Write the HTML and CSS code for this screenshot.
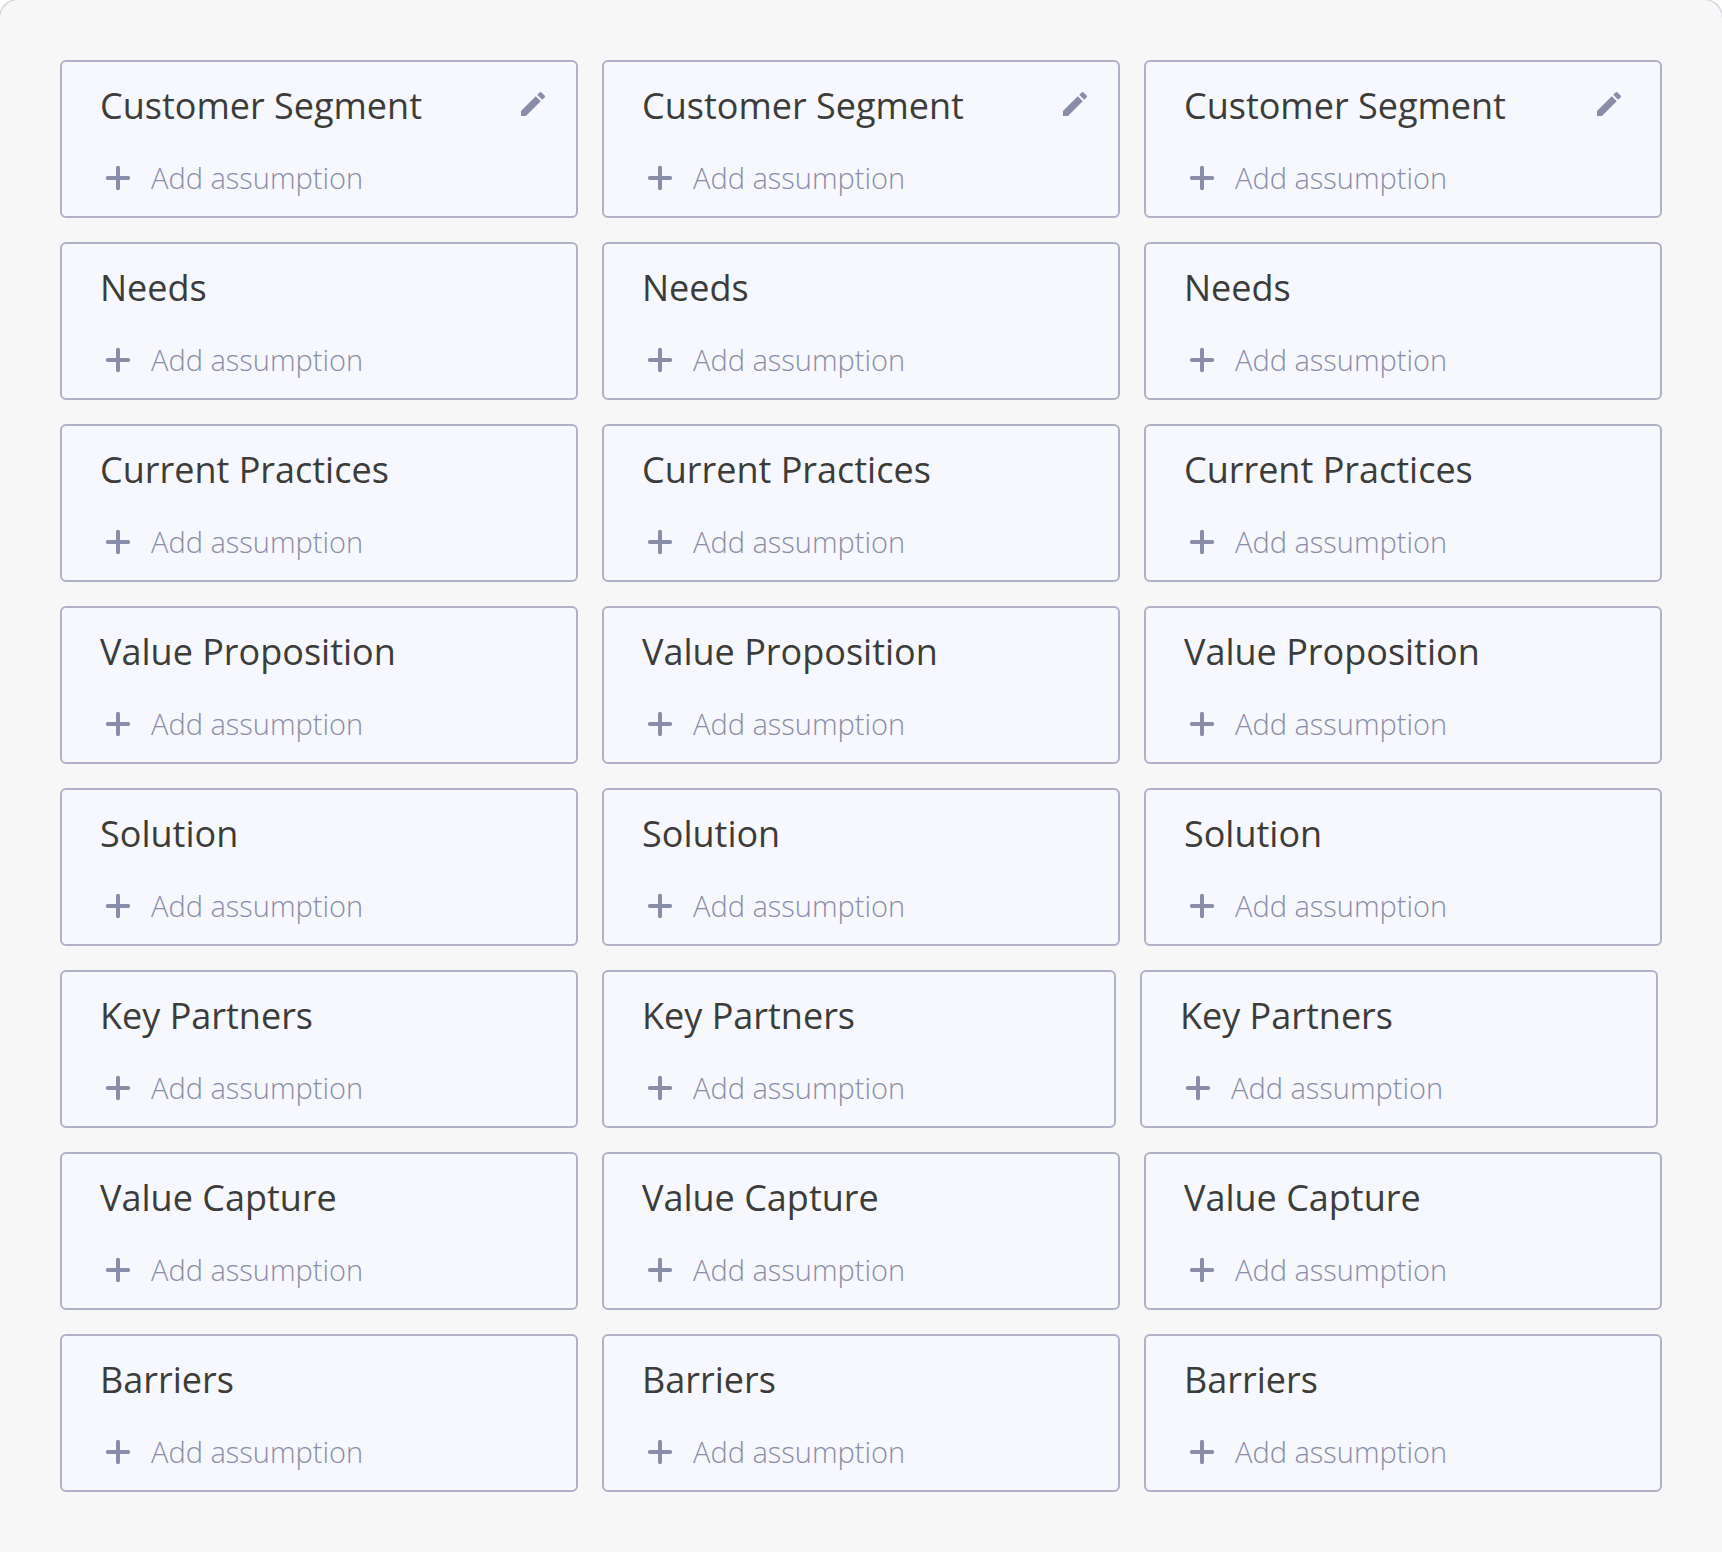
FILE: index.html
```
<!DOCTYPE html>
<html lang="en">
<head>
    <meta charset="UTF-8">
    <meta name="viewport" content="width=device-width, initial-scale=1.0">
    <title>Assumptions</title>
    <link rel="stylesheet" href="styles.css">
</head>
<body>

    <!-- Shared icons -->
    <svg class="icon-defs" aria-hidden="true">
        <symbol id="plus" viewBox="0 0 26 26">
            <path d="M13 2.8v20.4M2.8 13h20.4" fill="none" stroke="currentColor" stroke-width="4" stroke-linecap="round"/>
        </symbol>
        <symbol id="pencil" viewBox="3 3 18 18">
            <path d="M3 17.25V21h3.75L17.81 9.94l-3.75-3.75L3 17.25zM20.71 7.04a1 1 0 0 0 0-1.41l-2.34-2.34a1 1 0 0 0-1.41 0l-1.83 1.83 3.75 3.75 1.83-1.83z" fill="currentColor"/>
        </symbol>
    </svg>

    <main class="board" id="board"></main>

    <script>
        var sections = [
            'Customer Segment',
            'Needs',
            'Current Practices',
            'Value Proposition',
            'Solution',
            'Key Partners',
            'Value Capture',
            'Barriers'
        ];
        var board = document.getElementById('board');

        sections.forEach(function(name, index) {
            var row = document.createElement('section');
            row.className = name === 'Key Partners' ? 'row row-partners' : 'row';
            var edit = index === 0 ? `<button class="edit" aria-label="Edit ${name}"><svg class="pencil"><use href="#pencil"/></svg></button>` : '';

            for (var i = 0; i < 3; i++) {
                row.innerHTML += `<article class="card">
                    <header class="card-header"><h2 class="title">${name}</h2>${edit}</header>
                    <button class="add"><svg class="plus"><use href="#plus"/></svg><span>Add assumption</span></button>
                </article>`;
            }
            board.appendChild(row);
        });
    </script>
</body>
</html>
```

FILE: styles.css
```
* {
    box-sizing: border-box;
}
body {
    margin: 0;
    background-color: #fff;
    font-family: "Open Sans", "Noto Sans", sans-serif;
}
.icon-defs {
    display: none;
}
.board {
    display: flex;
    flex-direction: column;
    gap: 24px;
    min-height: 100vh;
    padding: 60px;
    background-color: #f7f7f7;
    border-radius: 18px 18px 0 0;
    box-shadow: 0 0 0 1px #c8c8d2;
}
.row {
    display: flex;
    gap: 24px;
}
.card {
    flex: none;
    width: calc((100% - 48px) / 3);
    padding: 20px 31px 16px 38px;
    border: 2px solid #b0b0c6;
    border-radius: 6px;
    background-color: #f7f8fd;
}
.row-partners .card:nth-child(2) {
    width: calc((100% - 48px) / 3 - 4px);
}
.row:first-child .card:last-child {
    padding-right: 39px;
}
.card-header {
    display: flex;
    justify-content: space-between;
    align-items: center;
    height: 48px;
}
.title {
    margin: 0;
    color: #3c3c3b;
    font-size: 36px;
    font-weight: 400;
    line-height: 48px;
}
.edit,
.add {
    padding: 0;
    border: 0;
    background: none;
    color: #8a8da8;
    cursor: pointer;
}
.edit {
    padding-bottom: 4px;
}
.pencil {
    display: block;
    width: 24px;
    height: 24px;
}
.add {
    display: flex;
    align-items: center;
    gap: 20px;
    margin-top: 26px;
    padding-left: 5px;
    font-family: inherit;
    font-size: 29px;
    font-weight: 300;
    line-height: 44px;
}
.plus {
    width: 26px;
    height: 26px;
}
```
